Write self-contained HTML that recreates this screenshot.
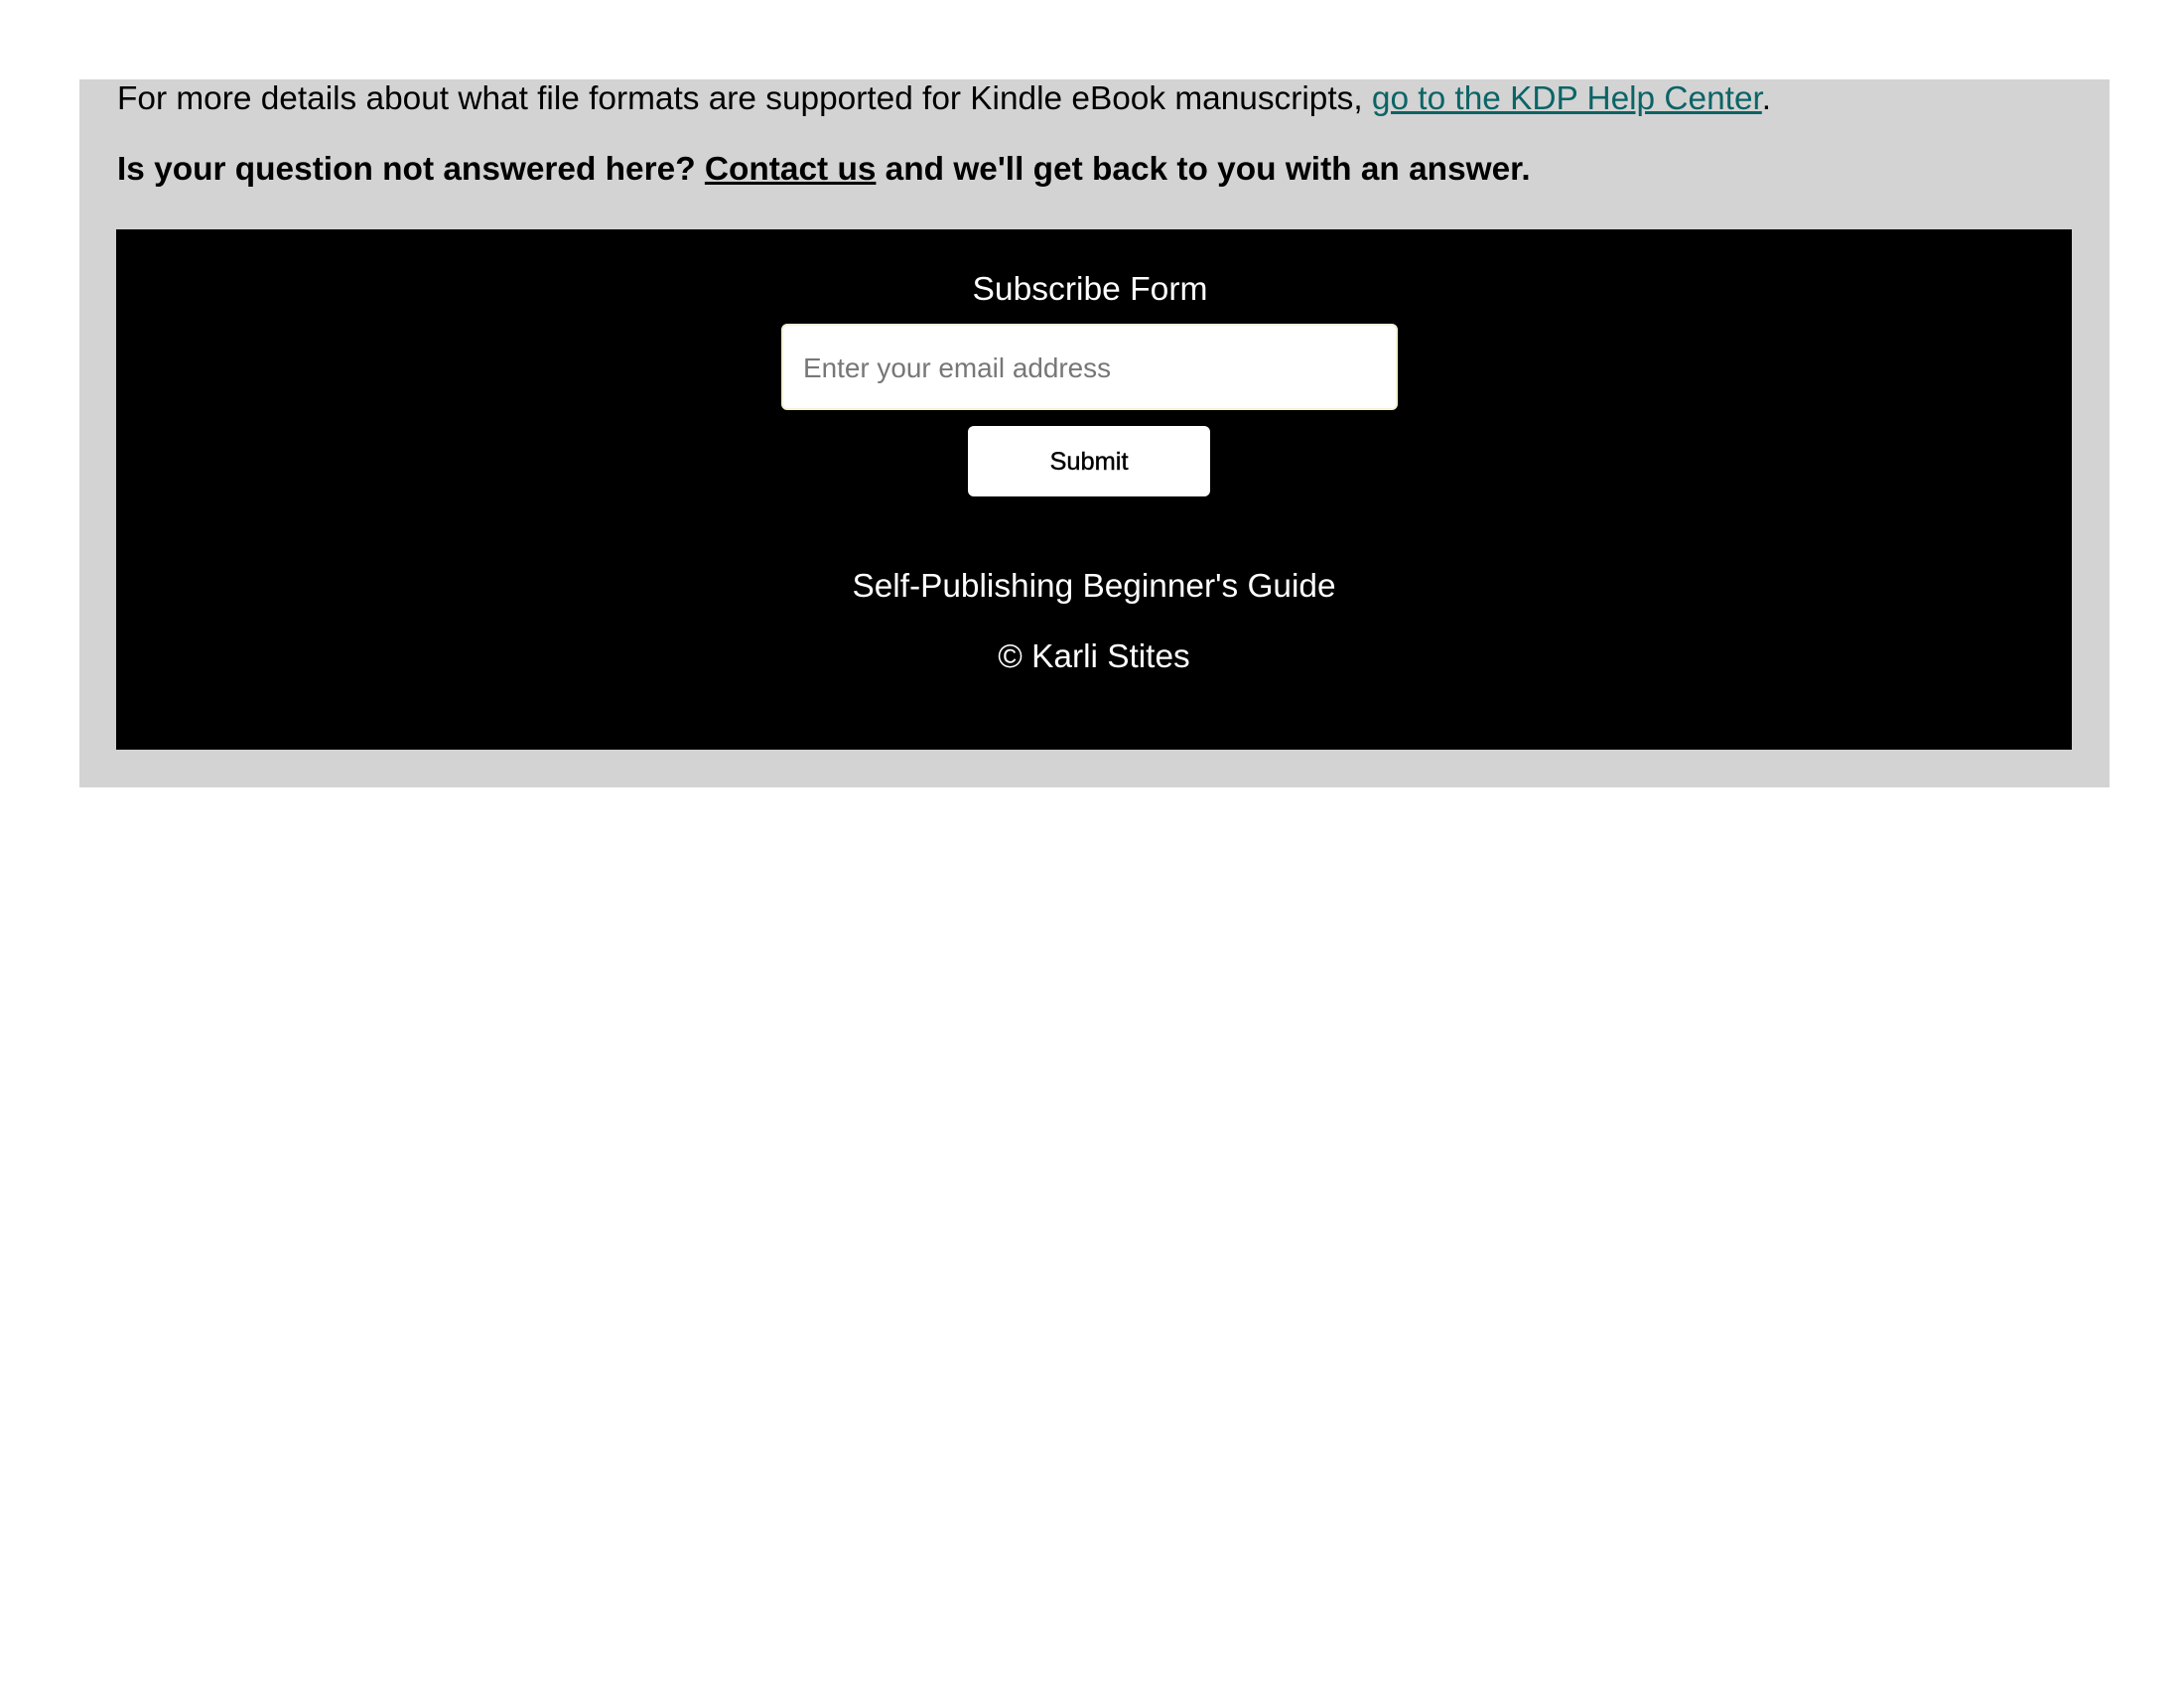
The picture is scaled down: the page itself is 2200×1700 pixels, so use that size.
<!DOCTYPE html>
<html><head><meta charset="utf-8"><style>
body{margin:0;width:2200px;height:1700px;background:#fff;font-family:"Liberation Sans",Arial,sans-serif;position:relative;overflow:hidden}
.gray{position:absolute;left:80px;top:80px;width:2045px;height:713px;background:#d3d3d3}
.t{position:absolute;left:118px;font-size:33.4px;white-space:nowrap;line-height:1}
.black{position:absolute;left:117px;top:231px;width:1970px;height:524px;background:#000}
.c{position:absolute;left:0;width:2200px;text-align:center;color:#fff;font-size:33.4px;line-height:1;white-space:nowrap}
a{color:#0b6466}
.inp{position:absolute;left:787px;top:326px;width:617px;height:83px;background:#fff;border:2px solid #f3f1d8;border-radius:6px}
.btn{position:absolute;left:975px;top:429px;width:244px;height:71px;background:#fff;border-radius:6px}
</style></head><body>
<div class="gray"></div>
<div class="t" style="top:83px">For more details about what file formats are supported for Kindle eBook manuscripts, <a href="#" style="text-decoration:underline">go to the KDP Help Center</a>.</div>
<div class="t" style="top:154px;font-weight:bold">Is your question not answered here? <u>Contact us</u> and we'll get back to you with an answer.</div>
<div class="black"></div>
<div class="c" style="top:275px;left:-2px;font-size:33.6px">Subscribe Form</div>
<div class="inp"></div>
<div style="position:absolute;left:809px;top:357px;font-size:27.9px;color:#777;line-height:1">Enter your email address</div>
<div class="btn"></div>
<div style="position:absolute;left:975px;width:244px;top:453px;font-size:25.4px;text-align:center;color:#000;line-height:1;-webkit-text-stroke:0.4px #000">Submit</div>
<div class="c" style="top:574px;left:2px">Self-Publishing Beginner's Guide</div>
<div class="c" style="top:645px;left:2px">© Karli Stites</div>
</body></html>
